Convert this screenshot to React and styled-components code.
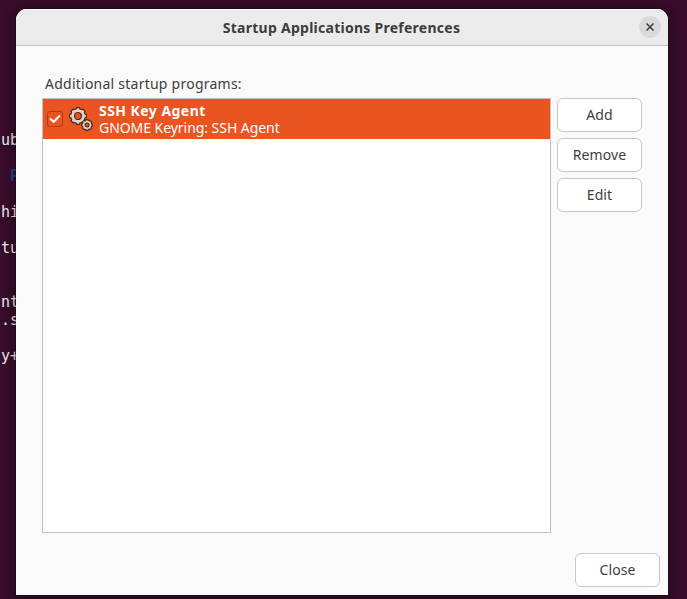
import React from "react";
import styled, { createGlobalStyle } from "styled-components";

const GlobalStyle = createGlobalStyle`
  * { box-sizing: border-box; }
  html, body { margin: 0; height: 100%; overflow: hidden; }
`;

const Desktop = styled.main`
  position: relative;
  width: 687px;
  height: 599px;
  overflow: hidden;
  background: #380c2a;
  font-family: "Noto Sans", "Open Sans", sans-serif;
  color: #3d3d3d;
`;

const Terminal = styled.div`
  padding: 131px 0 0 1px;
  font: 15px/18px "DejaVu Sans Mono", monospace;
  color: #ececec;
  white-space: pre;
`;

const TermLine = styled.div`
  height: 18px;
  color: ${(p) => p.$color || "inherit"};
  font-weight: ${(p) => (p.$color ? 700 : 400)};
`;

const Window = styled.section`
  position: absolute;
  left: 16px;
  top: 9px;
  width: 652px;
  height: 586px;
  display: flex;
  flex-direction: column;
  background: #fafafa;
  border-radius: 11px 11px 0 0;
  overflow: hidden;
  box-shadow: 0 2px 12px 3px rgba(0, 0, 0, 0.3), 0 0 0 1px rgba(0, 0, 0, 0.18);
`;

const TitleBar = styled.header`
  flex: none;
  height: 37px;
  display: grid;
  grid-template-columns: 26px 1fr 26px;
  align-items: center;
  padding: 0 5px 0 4px;
  background: #ebebeb;
  border-bottom: 1px solid #bfbfbf;
  box-shadow: inset 0 1px #fbfbfb;
`;

const Title = styled.h1`
  grid-column: 2;
  margin: 2px 0 0;
  text-align: center;
  font-size: 14px;
  line-height: 20px;
  font-weight: 700;
  letter-spacing: 0.26px;
`;

const CloseIconButton = styled.button`
  justify-self: center;
  width: 22px;
  height: 22px;
  padding: 0;
  display: grid;
  place-items: center;
  border: 0;
  border-radius: 50%;
  background: #dadada;
  color: #3d3d3d;
`;

const Content = styled.div`
  flex: 1;
  display: flex;
  flex-direction: column;
  padding: 28px 8px 8px 26px;
`;

const Caption = styled.div`
  height: 24px;
  padding-left: 3px;
  font-size: 14px;
  line-height: 20px;
  letter-spacing: 0.24px;
`;

const Columns = styled.div`
  display: flex;
  gap: 6px;
`;

const ProgramList = styled.div`
  width: 509px;
  height: 435px;
  background: #fff;
  border: 1px solid #c0c0c0;
`;

const ProgramRow = styled.div`
  height: 40px;
  display: flex;
  align-items: center;
  padding-left: 4px;
  background: #e95420;
  color: #fff;
`;

const Checkbox = styled.span`
  width: 16px;
  height: 16px;
  display: grid;
  place-items: center;
  border: 1px solid #b13c12;
  border-radius: 3px;
`;

const Gears = styled.svg`
  width: 24px;
  height: 24px;
  margin: 0 6px;
`;

const ProgramText = styled.div`
  font-size: 14px;
  line-height: 17px;
  white-space: nowrap;
`;

const ProgramName = styled.div`
  font-weight: 700;
  letter-spacing: 0.45px;
`;

const ProgramNote = styled.div`
  letter-spacing: -0.05px;
`;

const Actions = styled.div`
  display: flex;
  flex-direction: column;
  gap: 6px;
`;

const Button = styled.button`
  width: 85px;
  height: 34px;
  padding: 0 0 1px;
  background: #fff;
  border: 1px solid #c8c8c8;
  border-radius: 6px;
  color: #3d3d3d;
  font: 14px/20px "Noto Sans", "Open Sans", sans-serif;
  letter-spacing: 0.1px;
`;

const Footer = styled.footer`
  display: flex;
  justify-content: flex-end;
  margin-top: auto;
`;

const TERMINAL_LINES = [
  ["ub"], [""], [" P", "#12488b"], [""], ["hi"], [""], ["tu"],
  [""], [""], ["nt"], [".s"], [""], ["y+"],
];

function Gear({ cx, cy, r, hole, teeth, tooth }) {
  const outline = [];
  const step = (Math.PI * 2) / teeth;
  for (let i = 0; i < teeth; i++) {
    [[-0.32, r], [-0.24, r + tooth], [0.24, r + tooth], [0.32, r]].forEach(([o, d]) => {
      const a = (i + o) * step;
      outline.push(`${(cx + d * Math.cos(a)).toFixed(2)} ${(cy + d * Math.sin(a)).toFixed(2)}`);
    });
  }
  return (
    <path
      stroke="#5a2a1a"
      strokeWidth="1.2"
      strokeLinejoin="round"
      fill="#dcd8cf"
      fillRule="evenodd"
      d={`M${outline.join("L")}ZM${cx - hole} ${cy}a${hole} ${hole} 0 1 0 ${hole * 2} 0a${hole} ${hole} 0 1 0 ${-hole * 2} 0Z`}
    />
  );
}

export default function App() {
  return (
    <Desktop>
      <GlobalStyle />
      <Terminal>
        {TERMINAL_LINES.map(([text, color], i) => (
          <TermLine key={i} $color={color}>{text}</TermLine>
        ))}
      </Terminal>
      <Window>
        <TitleBar>
          <Title>Startup Applications Preferences</Title>
          <CloseIconButton aria-label="Close window">
            <svg width="8" height="8" viewBox="0 0 8 8" fill="none" stroke="currentColor" strokeWidth="1.5">
              <path d="M.5.5l7 7M7.5.5l-7 7" />
            </svg>
          </CloseIconButton>
        </TitleBar>
        <Content>
          <Caption>Additional startup programs:</Caption>
          <Columns>
            <ProgramList>
              <ProgramRow>
                <Checkbox>
                  <svg width="12" height="10" viewBox="0 0 12 10" fill="none" stroke="#fff" strokeWidth="2">
                    <path d="M1 4.5l3.6 3.3L11 1.5" />
                  </svg>
                </Checkbox>
                <Gears viewBox="0 0 24 24">
                  <Gear cx={9} cy={9} r={7.3} hole={3.5} teeth={8} tooth={1.2} />
                  <Gear cx={18} cy={18} r={4.7} hole={1.9} teeth={8} tooth={0.8} />
                </Gears>
                <ProgramText>
                  <ProgramName>SSH Key Agent</ProgramName>
                  <ProgramNote>GNOME Keyring: SSH Agent</ProgramNote>
                </ProgramText>
              </ProgramRow>
            </ProgramList>
            <Actions>
              <Button>Add</Button>
              <Button>Remove</Button>
              <Button>Edit</Button>
            </Actions>
          </Columns>
          <Footer>
            <Button>Close</Button>
          </Footer>
        </Content>
      </Window>
    </Desktop>
  );
}
